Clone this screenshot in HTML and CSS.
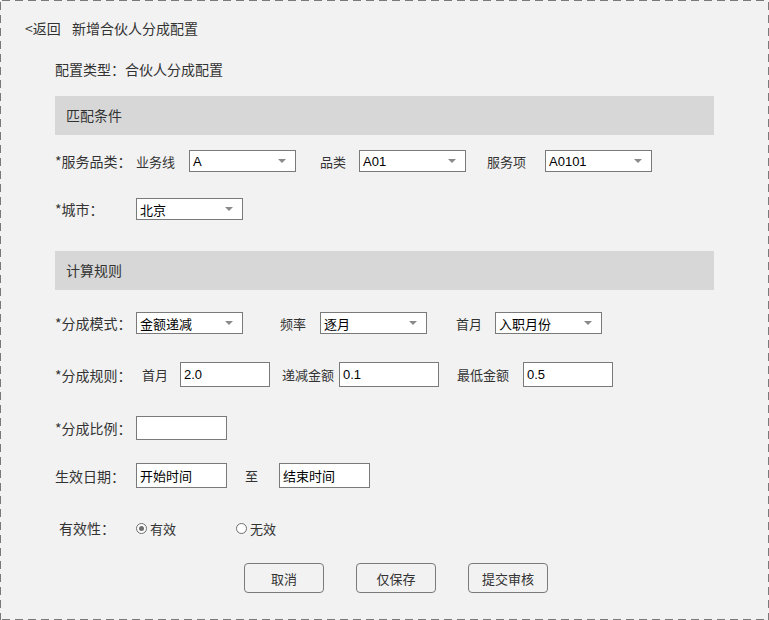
FILE: index.html
```html
<!DOCTYPE html>
<html lang="zh-CN">
<head>
<meta charset="utf-8">
<title>新增合伙人分成配置</title>
<link rel="stylesheet" href="styles.css">
</head>
<body>
<div class="page">
  <div class="topbar">
    <span class="back">&lt;返回</span>
    <span class="title">新增合伙人分成配置</span>
  </div>
  <div class="content">
    <div class="type-line">配置类型：合伙人分成配置</div>

    <div class="section-bar bar-match">匹配条件</div>

    <div class="row row-service">
      <span class="label">*服务品类：</span>
      <span class="sub w-line">业务线</span>
      <div class="select"><span class="val">A</span><svg class="arrow" width="8" height="4" viewBox="0 0 8 4"><path d="M0 0H8L4 4Z"/></svg></div>
      <span class="sub w-cat">品类</span>
      <div class="select"><span class="val">A01</span><svg class="arrow" width="8" height="4" viewBox="0 0 8 4"><path d="M0 0H8L4 4Z"/></svg></div>
      <span class="sub w-item">服务项</span>
      <div class="select"><span class="val">A0101</span><svg class="arrow" width="8" height="4" viewBox="0 0 8 4"><path d="M0 0H8L4 4Z"/></svg></div>
    </div>

    <div class="row row-city">
      <span class="label">*城市：</span>
      <div class="select"><span class="val">北京</span><svg class="arrow" width="8" height="4" viewBox="0 0 8 4"><path d="M0 0H8L4 4Z"/></svg></div>
    </div>

    <div class="section-bar bar-calc">计算规则</div>

    <div class="row row-mode">
      <span class="label">*分成模式：</span>
      <div class="select"><span class="val">金额递减</span><svg class="arrow" width="8" height="4" viewBox="0 0 8 4"><path d="M0 0H8L4 4Z"/></svg></div>
      <span class="sub w-freq">频率</span>
      <div class="select"><span class="val">逐月</span><svg class="arrow" width="8" height="4" viewBox="0 0 8 4"><path d="M0 0H8L4 4Z"/></svg></div>
      <span class="sub w-first">首月</span>
      <div class="select"><span class="val">入职月份</span><svg class="arrow" width="8" height="4" viewBox="0 0 8 4"><path d="M0 0H8L4 4Z"/></svg></div>
    </div>

    <div class="row row-rule">
      <span class="label">*分成规则：</span>
      <span class="sub w-rfirst">首月</span>
      <div class="input w90">2.0</div>
      <span class="sub w-dec">递减金额</span>
      <div class="input w100">0.1</div>
      <span class="sub w-min">最低金额</span>
      <div class="input w90">0.5</div>
    </div>

    <div class="row row-ratio">
      <span class="label">*分成比例：</span>
      <div class="input w91"></div>
    </div>

    <div class="row row-date">
      <span class="label">生效日期：</span>
      <div class="input w91">开始时间</div>
      <span class="sub w-to">至</span>
      <div class="input w91">结束时间</div>
    </div>

    <div class="row row-valid">
      <span class="label label-indent">有效性：</span>
      <span class="radio-item"><span class="radio checked"></span>有效</span>
      <span class="radio-item"><span class="radio"></span>无效</span>
    </div>

    <div class="actions">
      <button class="btn">取消</button>
      <button class="btn">仅保存</button>
      <button class="btn">提交审核</button>
    </div>
  </div>
</div>
</body>
</html>
```

FILE: styles.css
```css
html, body {
  margin: 0;
  padding: 0;
}

body {
  font-family: "Noto Sans CJK SC", "Noto Sans", sans-serif;
  font-size: 14px;
  color: #333333;
}

.page {
  box-sizing: border-box;
  width: 769px;
  height: 620px;
  background-color: #f2f2f2;
  background-image:
    repeating-linear-gradient(90deg, #7a7a7a 0 8px, transparent 8px 13px),
    repeating-linear-gradient(90deg, #7a7a7a 0 8px, transparent 8px 13px),
    repeating-linear-gradient(180deg, #7a7a7a 0 8px, transparent 8px 13px),
    repeating-linear-gradient(180deg, #7a7a7a 0 8px, transparent 8px 13px);
  background-size: 100% 1px, 100% 1px, 1px 100%, 1px 100%;
  background-position: 2px 0, 2px 100%, 0 2px, 100% 2px;
  background-repeat: no-repeat;
  overflow: hidden;
}

.topbar {
  display: flex;
  align-items: center;
  height: 20px;
  margin-top: 18px;
  padding-left: 25px;
}

.back {
  width: 47px;
}

.content {
  margin-left: 55px;
  width: 659px;
}

.type-line {
  height: 20px;
  line-height: 20px;
  margin-top: 21px;
}

.section-bar {
  height: 39px;
  line-height: 39px;
  padding-left: 11px;
  background: #d7d7d7;
  box-sizing: border-box;
}

.bar-match { margin-top: 17px; }
.bar-calc { margin-top: 31px; }

.row {
  display: flex;
  align-items: center;
}

.row-service { height: 22px; margin-top: 15px; }
.row-city { height: 22px; margin-top: 26px; }
.row-mode { height: 22px; margin-top: 22px; }
.row-rule { height: 25px; margin-top: 28px; }
.row-ratio { height: 24px; margin-top: 29px; }
.row-date { height: 25px; margin-top: 23px; }
.row-valid { height: 20px; margin-top: 30px; }

.label {
  width: 81px;
  flex: none;
  white-space: nowrap;
}

.label-indent {
  box-sizing: border-box;
  padding-left: 4px;
}

.sub {
  flex: none;
  white-space: nowrap;
  font-size: 13px;
}

.w-line { width: 53px; }
.w-cat { margin-left: 24px; width: 39px; }
.w-item { margin-left: 21px; width: 58px; }
.w-freq { margin-left: 37px; width: 40px; }
.w-first { margin-left: 29px; width: 39px; }
.w-rfirst { margin-left: 6px; width: 38px; }
.w-dec { margin-left: 12px; width: 57px; }
.w-min { margin-left: 18px; width: 66px; }
.w-to { margin-left: 18px; width: 34px; }

.select {
  box-sizing: border-box;
  flex: none;
  width: 107px;
  height: 22px;
  border: 1px solid #7a7a7a;
  background: #ffffff;
  display: flex;
  align-items: center;
  justify-content: space-between;
  padding: 0 9px 0 3px;
  font-family: "Liberation Sans", "Noto Sans CJK SC", sans-serif;
  font-size: 13px;
  color: #000000;
}

.select .arrow {
  fill: #8a8a8a;
  flex: none;
}

.input {
  box-sizing: border-box;
  flex: none;
  height: 100%;
  border: 1px solid #7a7a7a;
  background: #ffffff;
  display: flex;
  align-items: center;
  padding-left: 3px;
  font-family: "Liberation Sans", "Noto Sans CJK SC", sans-serif;
  font-size: 13px;
  color: #000000;
}

.w90 { width: 90px; }
.w91 { width: 91px; }
.w100 { width: 100px; }

.radio-item {
  display: flex;
  align-items: center;
  width: 100px;
  flex: none;
  font-size: 13px;
}

.radio {
  box-sizing: border-box;
  width: 11px;
  height: 11px;
  border: 1px solid #6e6e6e;
  border-radius: 50%;
  background: #ffffff;
  margin-right: 3px;
  position: relative;
}

.radio.checked::after {
  content: "";
  position: absolute;
  left: 2px;
  top: 2px;
  width: 5px;
  height: 5px;
  border-radius: 50%;
  background: #6e6e6e;
}

.actions {
  display: flex;
  gap: 32px;
  margin-top: 25px;
  margin-left: 189px;
}

.btn {
  box-sizing: border-box;
  width: 80px;
  height: 30px;
  border: 1px solid #7a7a7a;
  border-radius: 4px;
  background: transparent;
  font-family: "Noto Sans CJK SC", sans-serif;
  font-size: 13px;
  color: #333333;
  padding: 0;
}
```
